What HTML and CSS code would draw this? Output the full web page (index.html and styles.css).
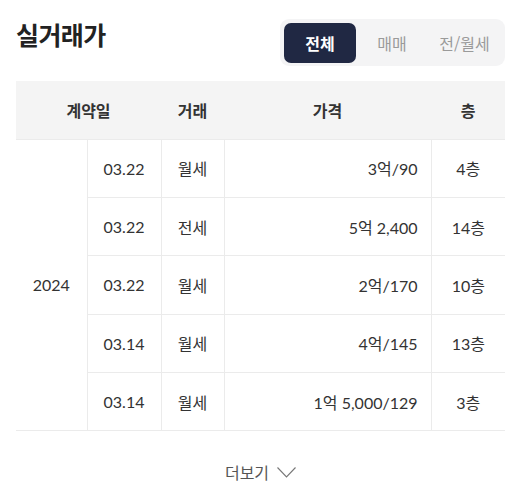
FILE: index.html
```html
<!DOCTYPE html>
<html lang="ko">
<head>
<meta charset="utf-8">
<link rel="stylesheet" href="styles.css">
</head>
<body>
<section class="deals">
  <div class="deals-head">
    <h2 class="deals-title">실거래가</h2>
    <div class="tabs">
      <button class="tab tab-active">전체</button>
      <button class="tab">매매</button>
      <button class="tab">전/월세</button>
    </div>
  </div>
  <table class="deal-table">
    <colgroup>
      <col class="c-year"><col class="c-date"><col class="c-type"><col class="c-price"><col class="c-floor">
    </colgroup>
    <thead>
      <tr><th colspan="2">계약일</th><th>거래</th><th>가격</th><th>층</th></tr>
    </thead>
    <tbody>
      <tr><td class="year" rowspan="5">2024</td><td class="num">03.22</td><td>월세</td><td class="price">3억/90</td><td class="floor">4층</td></tr>
      <tr><td class="num">03.22</td><td>전세</td><td class="price">5억 2,400</td><td class="floor">14층</td></tr>
      <tr><td class="num">03.22</td><td>월세</td><td class="price">2억/170</td><td class="floor">10층</td></tr>
      <tr><td class="num">03.14</td><td>월세</td><td class="price">4억/145</td><td class="floor">13층</td></tr>
      <tr><td class="num">03.14</td><td>월세</td><td class="price">1억 5,000/129</td><td class="floor">3층</td></tr>
    </tbody>
  </table>
  <div class="more-wrap">
    <button class="more">더보기
      <svg class="chev" width="19" height="11" viewBox="0 0 19 11" fill="none"><path d="M0.5 0.5l9 9.5 9-9.5" stroke="#777" stroke-width="1.1"/></svg>
    </button>
  </div>
</section>
</body>
</html>
```
FILE: styles.css
```css
* { box-sizing: border-box; }
body {
  margin: 0;
  background: #fff;
  font-family: Lato, "Noto Sans CJK KR", sans-serif;
  color: #333;
}
.deals { padding: 19px 10px 0 16px; }
.deals-head {
  display: flex;
  justify-content: space-between;
  align-items: flex-start;
}
.deals-title {
  margin: 0;
  font-family: "Noto Sans CJK KR", sans-serif;
  font-size: 25px;
  font-weight: 700;
  letter-spacing: -0.6px;
  line-height: 30px;
  color: #222;
}
.tabs {
  display: grid;
  grid-template-columns: 72px 72px 73px;
  padding: 4px 4px 3px;
  background: #f4f4f5;
  border-radius: 9px;
  width: 225px;
}
.tab {
  height: 40px;
  border: 0;
  background: transparent;
  font-family: "Noto Sans CJK KR", sans-serif;
  font-size: 16px;
  color: #9a9a9a;
  border-radius: 7px;
  padding: 0;
}
.tab-active {
  background: #202843;
  color: #fff;
  font-weight: 700;
}
.deal-table {
  margin-top: 15px;
  width: 489px;
  border-collapse: collapse;
  table-layout: fixed;
  font-size: 16px;
}
.c-year { width: 71px; }
.c-date { width: 74px; }
.c-type { width: 63px; }
.c-price { width: 207px; }
.c-floor { width: 74px; }
.deal-table th {
  height: 58px;
  background: #f4f4f4;
  font-family: "Noto Sans CJK KR", sans-serif;
  font-weight: 700;
  color: #333;
  font-size: 16px;
  padding: 0;
}
.deal-table td {
  height: 58.4px;
  border: 1px solid #ebebeb;
  text-align: center;
  padding: 0;
  color: #333;
}
.deal-table td.year { border-left: 0; }
.deal-table td.floor { border-right: 0; }
.deal-table td.price { text-align: right; padding-right: 13px; }
.more-wrap {
  display: flex;
  justify-content: center;
  padding-top: 29px;
}
.more {
  display: flex;
  align-items: center;
  gap: 8px;
  border: 0;
  background: transparent;
  font-family: "Noto Sans CJK KR", sans-serif;
  font-size: 16px;
  color: #555;
  padding: 0;
}
```
